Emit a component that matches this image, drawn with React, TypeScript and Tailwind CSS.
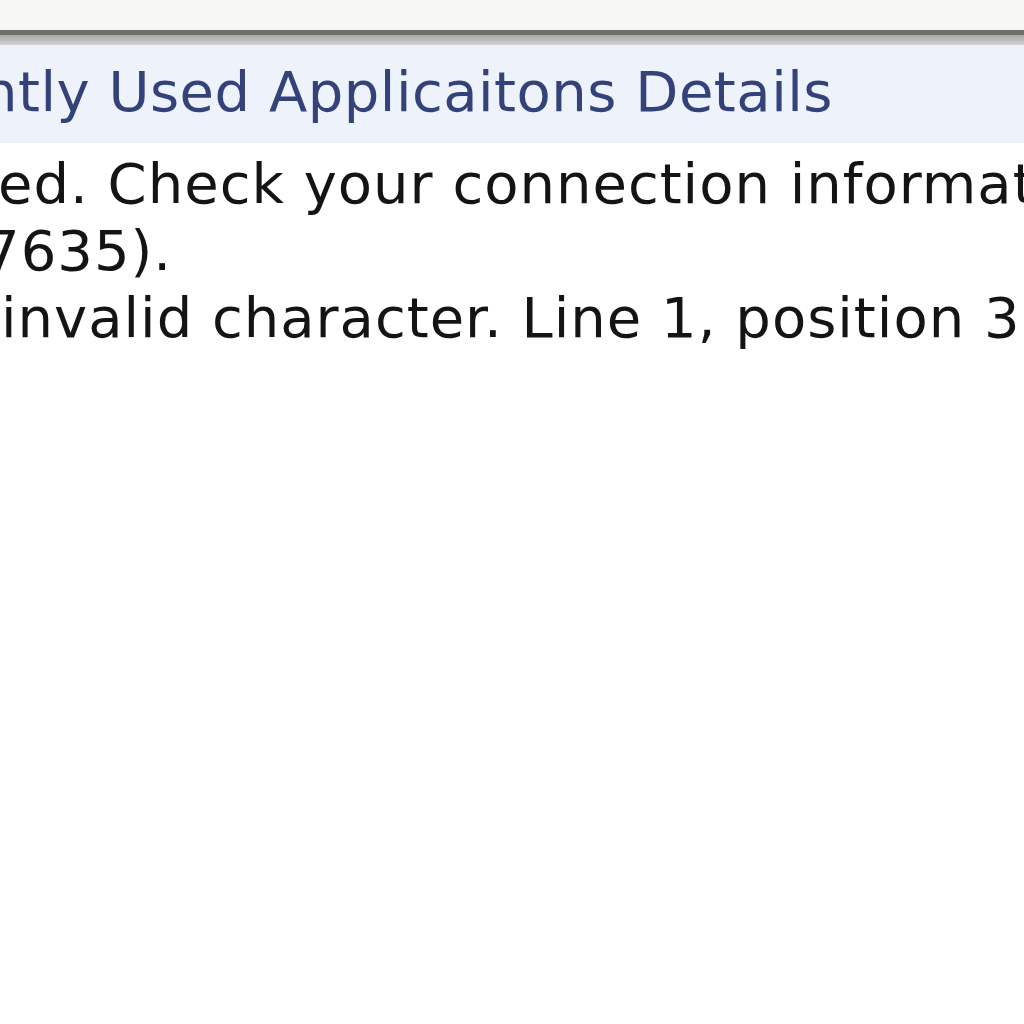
import React from 'react';

const font = { fontFamily: 'Verdana, "DejaVu Sans", sans-serif' };

export default function App() {
  return (
    <div className="w-[1024px] h-[1024px] overflow-hidden bg-white" style={font}>
      {/* top chrome */}
      <div className="h-[30px] bg-[#f7f7f6]" />
      <div className="h-[5px] bg-[#6e6e6e]" />
      <div className="h-[10px] bg-gradient-to-b from-[#a6a6a6] to-[#d3d3d3]" />

      {/* web part title */}
      <div className="h-[98px] bg-[#eef3fb] pt-[13px] overflow-hidden">
        <div className="whitespace-nowrap text-[56px] leading-[67px] tracking-[0.5px] text-[#34427a] ml-[-18px]">
          ntly Used Applicaitons Details
        </div>
      </div>

      {/* error message */}
      <div className="pt-[7px] text-[56px] leading-[67px] tracking-[1px] text-[#141414] whitespace-nowrap overflow-hidden">
        <div className="ml-[-2px]">ed. Check your connection information</div>
        <div className="ml-[-16px]">7635).</div>
        <div className="ml-[1px]">invalid character. Line 1, position 3</div>
      </div>
    </div>
  );
}
